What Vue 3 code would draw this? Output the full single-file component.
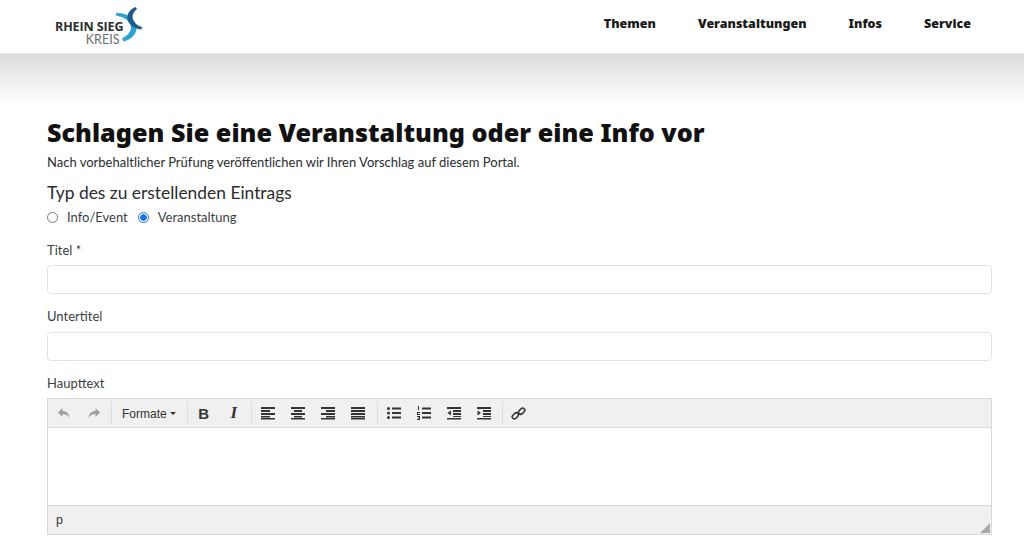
<script setup>
const navItems = ['Themen', 'Veranstaltungen', 'Infos', 'Service']
</script>

<template>
  <div class="page">
    <header class="header">
      <a class="logo">
        <span class="logo-text">
          <span class="logo-top">RHEIN SIEG</span>
          <span class="logo-bottom">KREIS</span>
        </span>
        <svg class="logo-mark" width="30" height="38" viewBox="115 6 30 38">
          <path d="M117 13 C126 12 137 18 137.500 28 C137.500 35 131 40 124.500 41.500 L123 38.500 C128 36 132 32 132 27 C131.500 21 125 17 117 15.500 Z" fill="#2ba3d3" />
          <path d="M136.500 7 L138 9 C134 12 133 16 134 19 C135 23 139 26 143 27 L142.500 29.500 C136 29 130 25 128.500 19.500 C127.500 14 131 9 136.500 7 Z" fill="#1d5b8f" />
        </svg>
      </a>
      <nav class="nav">
        <a v-for="item in navItems" :key="item" class="nav-item">{{ item }}</a>
      </nav>
    </header>
    <div class="band"></div>
    <main class="content">
      <h1 class="title">Schlagen Sie eine Veranstaltung oder eine Info vor</h1>
      <p class="lead">Nach vorbehaltlicher Prüfung veröffentlichen wir Ihren Vorschlag auf diesem Portal.</p>
      <h2 class="type">Typ des zu erstellenden Eintrags</h2>
      <div class="radios">
        <label class="radio"><span class="dot"></span>Info/Event</label>
        <label class="radio"><span class="dot on"></span>Veranstaltung</label>
      </div>
      <label class="field-label first">Titel *</label>
      <div class="input"></div>
      <label class="field-label">Untertitel</label>
      <div class="input"></div>
      <label class="field-label">Haupttext</label>
      <div class="editor">
        <div class="toolbar">
          <div class="group">
            <button class="tb muted"><svg width="14" height="14" viewBox="0 0 14 14"><path d="M5.500 2 L1 6.500 L5.500 11 V8 C8.500 8 10.500 9 12.500 12 C12 8 10 5 5.500 5 Z" /></svg></button>
            <button class="tb muted"><svg width="14" height="14" viewBox="0 0 14 14"><path d="M8.500 2 L13 6.500 L8.500 11 V8 C5.500 8 3.500 9 1.500 12 C2 8 4 5 8.500 5 Z" /></svg></button>
          </div>
          <div class="group formats-group">
            <button class="tb formats">Formate<span class="caret"></span></button>
          </div>
          <div class="group">
            <button class="tb glyph bold">B</button>
            <button class="tb glyph italic">I</button>
          </div>
          <div class="group wide">
            <button class="tb"><svg width="14" height="14" viewBox="0 0 14 14"><path d="M0 1h14v2H0zM0 4h9v2H0zM0 7h14v2H0zM0 10h9v1.500H0zM0 12h14v1.500H0z" /></svg></button>
            <button class="tb"><svg width="14" height="14" viewBox="0 0 14 14"><path d="M0 1h14v2H0zM3 4h8v2H3zM0 7h14v2H0zM3 10h8v1.500H3zM0 12h14v1.500H0z" /></svg></button>
            <button class="tb"><svg width="14" height="14" viewBox="0 0 14 14"><path d="M0 1h14v2H0zM5 4h9v2H5zM0 7h14v2H0zM5 10h9v1.500H5zM0 12h14v1.500H0z" /></svg></button>
            <button class="tb"><svg width="14" height="14" viewBox="0 0 14 14"><path d="M0 1h14v2H0zM0 4h14v2H0zM0 7h14v2H0zM0 10h14v1.500H0zM0 12h14v1.500H0z" /></svg></button>
          </div>
          <div class="group wide lists">
            <button class="tb"><svg width="14" height="14" viewBox="0 0 14 14"><circle cx="1.500" cy="2.500" r="1.500" /><circle cx="1.500" cy="7" r="1.500" /><circle cx="1.500" cy="11.500" r="1.500" /><path d="M5 1.500h9v2H5zM5 6h9v2H5zM5 10.500h9v2H5z" /></svg></button>
            <button class="tb"><svg width="14" height="14" viewBox="0 0 14 14"><path d="M1 0h1v4H1zM0 6h3v1H1v1h2v1H0zM0 10h3v4H0v-1h2v-.5H1v-1h1V11H0zM5 1.500h9v2H5zM5 6h9v2H5zM5 10.500h9v2H5z" /></svg></button>
            <button class="tb"><svg width="14" height="14" viewBox="0 0 14 14"><path d="M0 1h14v2H0zM6 4h8v2H6zM6 7h8v2H6zM6 10h8v1H6zM0 12h14v1.500H0zM4 4.500v5L0.500 7z" /></svg></button>
            <button class="tb"><svg width="14" height="14" viewBox="0 0 14 14"><path d="M0 1h14v2H0zM6 4h8v2H6zM6 7h8v2H6zM6 10h8v1H6zM0 12h14v1.500H0zM0.500 4.500v5L4 7z" /></svg></button>
          </div>
          <div class="group last">
            <button class="tb"><svg class="link" width="15" height="15" viewBox="0 0 14 14"><rect x="0.800" y="7.200" width="6.500" height="4" rx="2" transform="rotate(-45 4 9.200)" /><rect x="6.700" y="2.800" width="6.500" height="4" rx="2" transform="rotate(-45 10 4.800)" /></svg></button>
          </div>
        </div>
        <div class="edit-area"></div>
        <div class="statusbar">
          <span class="path">p</span>
          <svg class="grip" width="10" height="10" viewBox="0 0 10 10"><path d="M10 0V10H0Z" fill="#a9a9a9" /></svg>
        </div>
      </div>
    </main>
  </div>
</template>

<style>
html, body { margin: 0; background: #fff; overflow: hidden; }
</style>

<style scoped>
.page { width: 1024px; height: 547px; overflow: hidden; font-family: Lato, sans-serif; color: #212529; background: #fff; }
.header { height: 53px; display: flex; justify-content: space-between; align-items: center; background: #fff; border-bottom: 1px solid #e8e8e8; }
.logo { display: flex; align-items: flex-start; margin-left: 55px; align-self: flex-start; padding-top: 6px; }
.logo-text { display: flex; flex-direction: column; align-items: flex-end; margin-top: 16px; }
.logo-top { font-family: "Open Sans", sans-serif; font-size: 12.500px; line-height: 10px; font-weight: 700; color: #2a2d30; letter-spacing: -0.100px; white-space: nowrap; }
.logo-bottom { font-size: 12.500px; line-height: 9px; margin-top: 3px; font-weight: 400; color: #6a6d70; margin-right: 4px; }
.logo-mark { margin-left: -9px; }
.nav { display: flex; gap: 42px; margin-right: 53px; margin-top: -6px; }
.nav-item { font-family: "Noto Sans", sans-serif; font-size: 12.500px; font-weight: 900; color: #1a1a1a; }
.band { height: 50px; background: linear-gradient(#dcdcdc, #fff); }
.content { padding: 0 32px 0 47px; }
.title { margin: 12px 0 0; font-family: "Noto Sans", sans-serif; font-size: 25.200px; line-height: 32px; font-weight: 900; color: #111; }
.lead { margin: 6px 0 0; font-size: 13px; line-height: 16px; color: #2a2d30; }
.type { margin: 13px 0 0; font-size: 17.400px; line-height: 20px; font-weight: 400; color: #2a2d30; }
.radios { display: flex; gap: 10px; margin-top: 6px; }
.radio { display: flex; align-items: center; gap: 9px; font-size: 13px; line-height: 16px; color: #3b3f43; }
.dot { width: 9px; height: 9px; border: 1px solid #77797d; border-radius: 50%; background: #fff; }
.dot.on { border-color: #1a73e8; background: radial-gradient(circle, #1a73e8 3px, #fff 3.500px); }
.field-label { display: block; margin-top: 14px; font-size: 13px; line-height: 16px; color: #3b3f43; }
.field-label.first { margin-top: 17px; }
.input { height: 27px; margin-top: 8px; border: 1px solid #dfe3e6; border-radius: 4px; background: #fff; }
.field-label.first + .input { margin-top: 7px; }
.editor { margin-top: 7px; border: 1px solid #d9d9d9; height: 135px; display: flex; flex-direction: column; }
.toolbar { height: 28px; display: flex; align-items: center; background: #f0f0f0; border-bottom: 1px solid #d9d9d9; }
.group { display: flex; align-items: center; height: 22px; border-right: 1px solid #dcdcdc; padding: 0 2px 0 1px; }
.group.wide { padding: 0 4px 0 1px; }
.group.lists { padding: 0 3px 0 1px; }
.group.last { border-right: none; }
.formats-group { padding: 0 11px 0 10px; }
.tb { width: 30px; height: 22px; padding: 0; border: 0; background: none; display: flex; align-items: center; justify-content: center; color: #333; }
.tb svg { fill: #333; }
.tb.muted svg { fill: #a0a0a0; }
.tb svg.link { fill: none; stroke: #333; stroke-width: 1.400; }
.tb.formats { width: auto; padding-top: 1px; font-family: "Liberation Sans", sans-serif; font-size: 12px; }
.caret { display: inline-block; margin-left: 3px; border: 3.500px solid transparent; border-top-color: #333; border-bottom: 0; }
.glyph { font-family: "Liberation Sans", sans-serif; font-size: 15px; font-weight: 700; }
.italic { font-style: italic; font-family: "Liberation Serif", serif; font-size: 17px; }
.edit-area { flex: 1; background: #fff; }
.statusbar { height: 28px; display: flex; align-items: center; background: #f0f0f0; border-top: 1px solid #d9d9d9; position: relative; }
.path { margin-left: 8px; font-family: "Liberation Sans", sans-serif; font-size: 12.500px; color: #333; }
.grip { position: absolute; right: 1px; bottom: 1px; }
</style>
